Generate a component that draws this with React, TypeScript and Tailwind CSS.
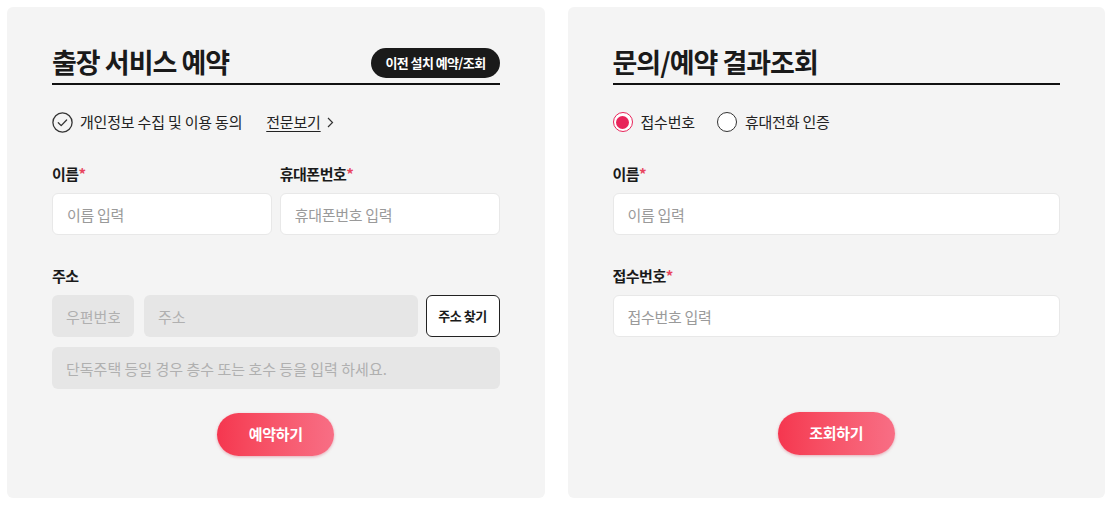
import React, { useState } from "react";

const font = { fontFamily: '"Noto Sans CJK KR", "Noto Sans", sans-serif' };

const Req = () => <span className="text-[#e8455f]">*</span>;

const Label = ({ children, req }: { children: React.ReactNode; req?: boolean }) => (
  <div className="mb-[9px] h-[20px] text-[15px] font-bold leading-[20px] tracking-[-0.5px] text-[#1a1a1a]">
    {children}
    {req && <Req />}
  </div>
);

const TextInput = ({ placeholder }: { placeholder: string }) => (
  <input
    type="text"
    placeholder={placeholder}
    className="h-[42px] w-full rounded-[6px] border border-[#e8e8e8] bg-white px-[14px] text-[15px] tracking-[-0.3px] text-[#222] outline-none placeholder:text-[#9a9a9a]"
  />
);

const GrayInput = ({ placeholder, className }: { placeholder: string; className?: string }) => (
  <input
    type="text"
    disabled
    placeholder={placeholder}
    className={`h-[42px] rounded-[6px] bg-[#e6e6e6] px-[14px] text-[15px] outline-none placeholder:text-[#b0b0b0] ${className || ""}`}
  />
);

const PinkButton = ({ children }: { children: React.ReactNode }) => (
  <button className="h-[43px] w-[117px] rounded-full bg-gradient-to-r from-[#f5364f] to-[#f86e85] text-[15px] font-bold tracking-[-0.3px] text-white shadow-[0_1px_3px_rgba(200,40,70,0.35)]">
    {children}
  </button>
);

const Header = ({ title, right }: { title: string; right?: React.ReactNode }) => (
  <div className="flex h-[42px] items-center justify-between border-b-2 border-[#111]">
    <h2 className="mb-[3px] text-[27px] font-bold leading-[36px] tracking-[-1px] text-[#1a1a1a]">{title}</h2>
    {right}
  </div>
);

const CheckCircle = () => (
  <svg width="21" height="21" viewBox="0 0 21 21" fill="none">
    <circle cx="10.5" cy="10.5" r="9.6" stroke="#333" strokeWidth="1.3" />
    <path d="M6.3 10.8l2.9 2.8 5.4-5.6" stroke="#333" strokeWidth="1.3" strokeLinecap="round" strokeLinejoin="round" />
  </svg>
);

const Radio = ({ checked }: { checked?: boolean }) =>
  checked ? (
    <span className="flex h-[20px] w-[20px] items-center justify-center rounded-full border-[1.5px] border-[#e8245a] bg-white">
      <span className="h-[13px] w-[13px] rounded-full bg-[#e8245a]" />
    </span>
  ) : (
    <span className="h-[20px] w-[20px] rounded-full border-[1.5px] border-[#333] bg-white" />
  );

const ReservationPanel = () => (
  <div className="h-[491px] flex-1 rounded-[6px] bg-[#f4f4f4] px-[45px] pt-[36px]">
    <Header
      title="출장 서비스 예약"
      right={
        <button className="h-[30px] rounded-full bg-[#1a1a1a] px-[14px] text-[13px] font-bold tracking-[-0.6px] text-white">
          이전 설치 예약/조회
        </button>
      }
    />
    <div className="mt-[27px] flex h-[20px] items-center text-[15px] tracking-[-0.2px] text-[#222]">
      <CheckCircle />
      <span className="ml-[7px]">개인정보 수집 및 이용 동의</span>
      <span className="ml-[24px] underline underline-offset-[3px]">전문보기</span>
      <svg className="ml-[6px]" width="7" height="11" viewBox="0 0 7 11" fill="none">
        <path d="M1 1l4.5 4.5L1 10" stroke="#333" strokeWidth="1.2" />
      </svg>
    </div>

    <div className="mt-[32px] grid grid-cols-2 gap-2">
      <div>
        <Label req>이름</Label>
        <TextInput placeholder="이름 입력" />
      </div>
      <div>
        <Label req>휴대폰번호</Label>
        <TextInput placeholder="휴대폰번호 입력" />
      </div>
    </div>

    <div className="mt-[31px]">
      <Label>주소</Label>
      <div className="flex items-center">
        <GrayInput placeholder="우편번호" className="w-[82px]" />
        <GrayInput placeholder="주소" className="ml-[10px] min-w-0 flex-1" />
        <button className="ml-[8px] h-[42px] w-[74px] rounded-[6px] border border-[#222] bg-white text-[13px] font-bold tracking-[-0.5px] text-[#1a1a1a]">
          주소 찾기
        </button>
      </div>
      <GrayInput placeholder="단독주택 등일 경우 층수 또는 호수 등을 입력 하세요." className="mt-[10px] h-[40px] w-full" />
    </div>

    <div className="mt-[24px] flex justify-center">
      <PinkButton>예약하기</PinkButton>
    </div>
  </div>
);

const InquiryPanel = () => {
  const [mode, setMode] = useState("receipt");
  return (
    <div className="h-[491px] flex-1 rounded-[6px] bg-[#f4f4f4] px-[45px] pt-[36px]">
      <Header title="문의/예약 결과조회" />
      <div className="mt-[27px] flex h-[20px] items-center text-[15px] tracking-[-0.2px] text-[#222]">
        <label className="flex items-center" onClick={() => setMode("receipt")}>
          <Radio checked={mode === "receipt"} />
          <span className="ml-[8px]">접수번호</span>
        </label>
        <label className="ml-[22px] flex items-center" onClick={() => setMode("phone")}>
          <Radio checked={mode === "phone"} />
          <span className="ml-[8px]">휴대전화 인증</span>
        </label>
      </div>

      <div className="mt-[32px]">
        <Label req>이름</Label>
        <TextInput placeholder="이름 입력" />
      </div>

      <div className="mt-[31px]">
        <Label req>접수번호</Label>
        <TextInput placeholder="접수번호 입력" />
      </div>

      <div className="mt-[75px] flex justify-center">
        <PinkButton>조회하기</PinkButton>
      </div>
    </div>
  );
};

export default function App() {
  return (
    <div className="min-h-[508px] bg-white p-[7px]" style={font}>
      <div className="flex gap-[23px]">
        <ReservationPanel />
        <InquiryPanel />
      </div>
    </div>
  );
}
